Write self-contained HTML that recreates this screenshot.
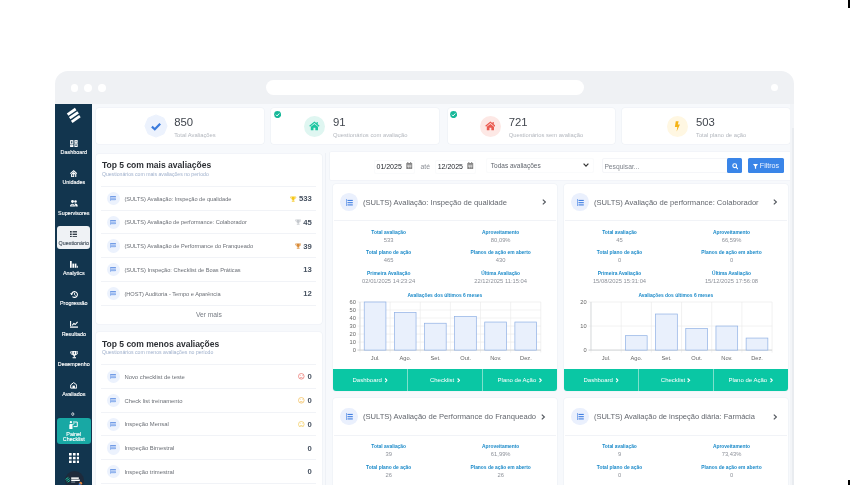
<!DOCTYPE html>
<html><head><meta charset="utf-8"><title>Painel Checklist</title>
<style>
*{box-sizing:border-box;margin:0;padding:0}
html,body{width:850px;height:485px;overflow:hidden;background:#fff;font-family:"Liberation Sans",sans-serif;}
.a{position:absolute}
.t{position:absolute;white-space:nowrap;line-height:1;transform:translateY(-50%);margin-top:0.7px}
.c{position:absolute;white-space:nowrap;line-height:1;transform:translate(-50%,-50%);margin-top:0.7px}
.r{position:absolute;white-space:nowrap;line-height:1;transform:translate(-100%,-50%);margin-top:0.7px}
.card{position:absolute;background:#fff;box-shadow:0 0 0 0.6px #edf0f5;border-radius:3px}
.sep{position:absolute;height:1px;background:#f1f3f7}
.sb{color:#fff;font-size:5.4px;-webkit-text-stroke:0.13px currentColor;margin-top:1.25px}
.lbl{color:#1b8ac9;font-size:4.9px;font-weight:bold}
.val{color:#8d9199;font-size:5.8px;margin-top:1.1px}
.li{color:#6b6f76;font-size:5.65px;margin-top:1.1px}
.num{color:#465160;font-size:7.7px;font-weight:bold}
.ax{color:#666;font-size:5.7px}
.btn{color:#fff;font-size:6px;margin-top:0.2px}
#root{position:absolute;left:0;top:0;width:850px;height:485px;overflow:hidden;will-change:transform;transform:translateZ(0)}
</style></head><body><div id="root">

<div class="a" style="left:848px;top:0;width:2px;height:8px;background:#000"></div>
<div class="a" style="left:848px;top:480px;width:2px;height:5px;background:#000"></div>
<div class="a" style="left:55px;top:71px;width:739px;height:430px;background:#eff1f4;border-radius:13px 13px 0 0"></div>
<div class="a" style="left:70.69999999999999px;top:84.0px;width:7.8px;height:7.8px;border-radius:50%;background:#fff"></div>
<div class="a" style="left:84.3px;top:84.0px;width:7.8px;height:7.8px;border-radius:50%;background:#fff"></div>
<div class="a" style="left:98.1px;top:84.0px;width:7.8px;height:7.8px;border-radius:50%;background:#fff"></div>
<div class="a" style="left:770.8px;top:84.2px;width:7.2px;height:7.2px;border-radius:50%;background:#fff"></div>
<div class="a" style="left:266px;top:80.2px;width:317.5px;height:15px;border-radius:7.5px;background:#fff"></div>
<div class="a" style="left:55px;top:104px;width:739px;height:390px;background:#f7f9fc"></div>
<div class="a" style="left:55px;top:104px;width:37.3px;height:390px;background:#12354e"></div>
<svg class="a" style="left:65px;top:106px" width="17" height="19" viewBox="0 0 17 19">
<g stroke="#fff" stroke-width="2.75" stroke-linecap="butt" fill="none">
<path d="M2.6 8.6 L10.7 3"/><path d="M4.7 12.1 L13.1 6.3"/><path d="M6.7 15.9 L14.9 10.2"/>
</g></svg>
<svg class="a" style="left:69.89999999999999px;top:139.6px" width="7.8" height="7.2" viewBox="0 0 7.8 7.2" fill="none" stroke="#fff" stroke-width="1.05">
<rect x="0.65" y="0.65" width="2.2" height="3.3"/><rect x="4.95" y="0.65" width="2.2" height="1.7"/><rect x="0.65" y="5.3" width="2.2" height="1.25"/><rect x="4.95" y="3.8" width="2.2" height="2.75"/></svg>
<div class="c sb" style="left:73.8px;top:151.3px;color:#fff">Dashboard</div>
<svg class="a" style="left:70.1px;top:169.70000000000002px" width="7.4" height="7.2" viewBox="0 0 7.4 7.2" fill="#fff">
<path d="M3.7 0 L0 3.3 L0.7 4 L3.7 1.4 L6.7 4 L7.4 3.3 Z"/><path d="M1.1 4 L3.7 1.9 L6.3 4 V7.2 H1.1 Z M2.2 4.3 V6.2 H3.2 V4.3 Z M4.2 4.3 V7.2 H5.2 V4.3 Z" fill-rule="evenodd"/></svg>
<div class="c sb" style="left:73.8px;top:182.1px;color:#fff">Unidades</div>
<svg class="a" style="left:69.89999999999999px;top:200.4px" width="7.8" height="6.4" viewBox="0 0 7.8 6.4" fill="#fff">
<circle cx="2.5" cy="1.5" r="1.45"/><circle cx="5.5" cy="1.5" r="1.3"/><path d="M0 6.4 C0 3 5 3 5 6.4 Z"/><path d="M5.4 6.4 C5.4 5 5 4.2 4.4 3.7 C6 3 7.8 3.8 7.8 6.4 Z"/>
<rect x="1.4" y="4.8" width="2.2" height="0.6" fill="#12354e"/></svg>
<div class="c sb" style="left:73.8px;top:212.5px;color:#fff">Supervisores</div>
<div class="a" style="left:56.9px;top:226.2px;width:33.5px;height:23.2px;border-radius:3px;background:#eff2f5"></div>
<svg class="a" style="left:70.0px;top:230.7px" width="7.4" height="6.6" viewBox="0 0 7.4 6.6" fill="#2a3540">
<rect x="0" y="0" width="1.7" height="1.6"/><rect x="2.6" y="0.15" width="4.8" height="1.3"/>
<rect x="0" y="2.5" width="1.7" height="1.6"/><rect x="2.6" y="2.65" width="4.8" height="1.3"/>
<rect x="0" y="5" width="1.7" height="1.6"/><rect x="2.6" y="5.15" width="4.8" height="1.3"/></svg>
<div class="c sb" style="left:73.8px;top:242.4px;color:#46525e">Questionário</div>
<svg class="a" style="left:69.89999999999999px;top:260.8px" width="7.8" height="6.8" viewBox="0 0 7.8 6.8" fill="#fff">
<rect x="0" y="0" width="1.7" height="6.8"/><rect x="2.4" y="2.6" width="1.8" height="4.2"/><rect x="4.8" y="2.6" width="1.6" height="4.2"/><rect x="6.8" y="4.8" width="1" height="2"/></svg>
<div class="c sb" style="left:73.8px;top:273.1px;color:#fff">Analytics</div>
<svg class="a" style="left:69.8px;top:291.2px" width="8" height="7" viewBox="0 0 8 7" fill="none" stroke="#fff" stroke-width="1.1">
<path d="M1.6 3.5 A2.9 2.9 0 1 1 2.5 5.6"/><path d="M4.5 1.9 V3.7 L5.7 4.5" stroke-width="0.9"/><path d="M0 2.3 L1.6 4.3 L3.2 2.5 Z" fill="#fff" stroke="none"/></svg>
<div class="c sb" style="left:73.8px;top:303.1px;color:#fff">Progressão</div>
<svg class="a" style="left:69.6px;top:321.20000000000005px" width="8.4" height="6.8" viewBox="0 0 8.4 6.8" fill="none" stroke="#fff" stroke-width="1.1">
<path d="M0.6 0 V5.2"/><path d="M0 6.1 H8.2" stroke-width="1.3"/><path d="M2.2 4.4 L3.9 2.4 L5.2 3.5 L7.6 0.8" stroke-linejoin="round"/></svg>
<div class="c sb" style="left:73.8px;top:333.6px;color:#fff">Resultado</div>
<svg class="a" style="left:69.5px;top:351.3px" width="8.6" height="7.4" viewBox="0 0 8.6 7.4" fill="#fff">
<path d="M2.2 0 H6.4 V2.6 C6.4 4.4 5.3 5 4.3 5 C3.3 5 2.2 4.4 2.2 2.6 Z"/><rect x="3.8" y="4.6" width="1" height="1.6"/><rect x="2.6" y="6.2" width="3.4" height="1.1"/>
<path d="M2.3 0.8 H0.6 C0.6 2.6 1.3 3.4 2.6 3.5" fill="none" stroke="#fff" stroke-width="0.9"/><path d="M6.3 0.8 H8 C8 2.6 7.3 3.4 6 3.5" fill="none" stroke="#fff" stroke-width="0.9"/>
<rect x="3.9" y="0.8" width="0.8" height="2.4" fill="#12354e"/></svg>
<div class="c sb" style="left:73.8px;top:363.5px;color:#fff">Desempenho</div>
<svg class="a" style="left:69.89999999999999px;top:382.0px" width="7.4" height="6.6" viewBox="0 0 7.4 6.6" fill="none" stroke="#fff" stroke-width="1">
<path d="M0.7 6.1 V2.9 L3.7 0.6 L6.7 2.9 V6.1 Z" stroke-linejoin="round"/><rect x="2.5" y="3.6" width="2.4" height="2.5" fill="#fff" stroke="none"/></svg>
<div class="c sb" style="left:73.8px;top:393.9px;color:#fff">Avaliados</div>
<svg class="a" style="left:71.4px;top:412px" width="3.6" height="4.2" viewBox="0 0 3.6 4.2"><ellipse cx="1.8" cy="2.1" rx="1.05" ry="1.35" fill="none" stroke="#fff" stroke-width="0.75"/></svg>
<div class="a" style="left:57px;top:417.6px;width:33.6px;height:26.2px;border-radius:3px;background:#18a8a4"></div>
<svg class="a" style="left:69.2px;top:420.8px" width="9" height="8" viewBox="0 0 9 8" fill="#fff">
<circle cx="1.9" cy="1.2" r="1.15"/><path d="M0.3 8 V4 C0.3 2.7 3.5 2.7 3.5 4 V8 Z"/><path d="M4 1 H8.3 V5.6 H4.6" fill="none" stroke="#fff" stroke-width="0.95"/><path d="M3.2 3.6 L5.4 2.6" stroke="#fff" stroke-width="0.9"/></svg>
<div class="c sb" style="left:73.8px;top:433.5px;color:#fff">Painel</div>
<div class="c sb" style="left:73.8px;top:438.6px;color:#fff">Checklist</div>
<svg class="a" style="left:68.5px;top:452.7px" width="10.6" height="10.2" viewBox="0 0 10.6 10.2" fill="#fff"><rect x="0.00" y="0.00" width="2.65" height="2.55"/><rect x="0.00" y="3.80" width="2.65" height="2.55"/><rect x="0.00" y="7.60" width="2.65" height="2.55"/><rect x="3.95" y="0.00" width="2.65" height="2.55"/><rect x="3.95" y="3.80" width="2.65" height="2.55"/><rect x="3.95" y="7.60" width="2.65" height="2.55"/><rect x="7.90" y="0.00" width="2.65" height="2.55"/><rect x="7.90" y="3.80" width="2.65" height="2.55"/><rect x="7.90" y="7.60" width="2.65" height="2.55"/></svg>
<div class="a" style="left:64.5px;top:470.5px;width:19px;height:19px;border-radius:50%;background:#1e2a3b"></div>
<svg class="a" style="left:64.5px;top:475.5px" width="18" height="9.5" viewBox="0 0 18 9.5">
<g stroke="#1bc5a0" stroke-width="1" fill="none"><path d="M0.6 3.4 L3.4 1.4"/><path d="M1.4 4.9 L4.6 2.6"/><path d="M2.6 6.2 L5.2 4.3"/></g>
<rect x="6.2" y="1.4" width="7.6" height="1.5" fill="#fff"/><rect x="6.2" y="3.5" width="8.6" height="1.5" fill="#fff"/><rect x="6.2" y="5.6" width="4" height="0.9" fill="#8fa0ad"/>
<circle cx="15.6" cy="7.2" r="1.5" fill="#e8873a"/><circle cx="14.6" cy="8.3" r="1" fill="#2f6fd6"/></svg>
<div class="card" style="left:95.8px;top:107.5px;width:168.2px;height:36.5px"></div>
<svg class="a" style="left:144px;top:114.4px" width="24" height="24" viewBox="-12 -12 24 24">
<polygon fill="#ecf2fd" points="11.10,0.00 9.52,3.94 7.85,7.85 3.94,9.52 0.00,11.10 -3.94,9.52 -7.85,7.85 -9.52,3.94 -11.10,0.00 -9.52,-3.94 -7.85,-7.85 -3.94,-9.52 -0.00,-11.10 3.94,-9.52 7.85,-7.85 9.52,-3.94" stroke="#ecf2fd" stroke-width="1" stroke-linejoin="round"/>
<path d="M-4.1 0.6 L-1.2 3.3 L4.2 -2.2" fill="none" stroke="#3b7bdc" stroke-width="2.2"/></svg>
<div class="t" style="left:174.2px;top:122.6px;font-size:11.3px;color:#41464e">850</div>
<div class="t" style="left:174.2px;top:134.9px;font-size:5.8px;color:#b3b7be">Total Avaliações</div>
<div class="card" style="left:271.3px;top:107.5px;width:168.0px;height:36.5px"></div>
<div class="a" style="left:303.79999999999995px;top:115.5px;width:21.2px;height:21.2px;border-radius:50%;background:#dff6f1"></div>
<svg class="a" style="left:309.0px;top:121.10000000000001px" width="10.8" height="9.6" viewBox="0 0 9 8" fill="#1bc5a0">
<path d="M4.5 0.4 L0.2 4 L0.9 4.7 L4.5 1.7 L8.1 4.7 L8.8 4 L7.3 2.7 V0.9 H6.3 V1.9 Z"/><path d="M1.5 4.8 L4.5 2.4 L7.5 4.8 V7.7 H5.3 V5.6 H3.7 V7.7 H1.5 Z"/></svg>
<div class="t" style="left:333px;top:122.6px;font-size:11.3px;color:#41464e">91</div>
<div class="t" style="left:333px;top:134.9px;font-size:5.8px;color:#b3b7be">Questionários com avaliação</div>
<div class="card" style="left:447.5px;top:107.5px;width:167.29999999999995px;height:36.5px"></div>
<div class="a" style="left:479.5px;top:115.5px;width:21.2px;height:21.2px;border-radius:50%;background:#fde8e5"></div>
<svg class="a" style="left:484.70000000000005px;top:121.10000000000001px" width="10.8" height="9.6" viewBox="0 0 9 8" fill="#ea5a50">
<path d="M4.5 0.4 L0.2 4 L0.9 4.7 L4.5 1.7 L8.1 4.7 L8.8 4 L7.3 2.7 V0.9 H6.3 V1.9 Z"/><path d="M1.5 4.8 L4.5 2.4 L7.5 4.8 V7.7 H5.3 V5.6 H3.7 V7.7 H1.5 Z"/></svg>
<div class="t" style="left:508.7px;top:122.6px;font-size:11.3px;color:#41464e">721</div>
<div class="t" style="left:508.7px;top:134.9px;font-size:5.8px;color:#b3b7be">Questionários sem avaliação</div>
<div class="card" style="left:622.4px;top:107.5px;width:167.60000000000002px;height:36.5px"></div>
<div class="a" style="left:666.6px;top:115.5px;width:21.2px;height:21.2px;border-radius:50%;background:#fff7e2"></div>
<svg class="a" style="left:673.9000000000001px;top:120.8px" width="6.6" height="10.8" viewBox="0 0 6 9" preserveAspectRatio="none" fill="#f5b417">
<path d="M1.6 0.3 H4.2 L3.5 3 H5.4 L2.4 8.8 L3 4.9 H0.8 Z"/></svg>
<div class="t" style="left:696px;top:122.6px;font-size:11.3px;color:#41464e">503</div>
<div class="t" style="left:696px;top:134.9px;font-size:5.8px;color:#b3b7be">Total plano de ação</div>
<svg class="a" style="left:274.0px;top:110.80000000000001px" width="7.2" height="7.2" viewBox="0 0 7.2 7.2"><circle cx="3.6" cy="3.6" r="3.5" fill="#17b899"/><path d="M1.9 3.7 L3.1 4.9 L5.3 2.5" fill="none" stroke="#fff" stroke-width="1"/></svg>
<svg class="a" style="left:449.79999999999995px;top:110.80000000000001px" width="7.2" height="7.2" viewBox="0 0 7.2 7.2"><circle cx="3.6" cy="3.6" r="3.5" fill="#17b899"/><path d="M1.9 3.7 L3.1 4.9 L5.3 2.5" fill="none" stroke="#fff" stroke-width="1"/></svg>
<div class="card" style="left:96.2px;top:153.5px;width:225.8px;height:170.1px"></div>
<div class="t" style="left:101.9px;top:164.3px;font-size:8.54px;font-weight:bold;color:#2d3035">Top 5 com mais avaliações</div>
<div class="t" style="left:101.9px;top:173.9px;font-size:5.15px;color:#9fb0cc">Questionários com mais avaliações no período</div>
<div class="sep" style="left:100.7px;top:186.00px;width:215.2px"></div>
<div class="a" style="left:106.7px;top:191.96px;width:13.2px;height:13.2px;border-radius:50%;background:#ecf2fd"></div>
<svg class="a" style="left:110.3px;top:195.86px" width="6" height="5" viewBox="0 0 6 5">
<rect x="0" y="0" width="0.6" height="5" fill="#6f9ae8"/><rect x="0.6" y="0.3" width="5.3" height="0.95" fill="#3f78dc"/><rect x="0.6" y="1.25" width="5.3" height="1.45" fill="#b9cff5"/><rect x="0.6" y="2.7" width="5.3" height="1" fill="#4f86e2"/><rect x="0.6" y="3.7" width="4.8" height="0.8" fill="#c6d8f7"/></svg>
<div class="t li" style="left:124.4px;top:198.56px">(SULTS) Avaliação: Inspeção de qualidade</div>
<div class="r num" style="left:311.8px;top:198.56px">533</div>
<svg class="a" style="left:290.40000000000003px;top:195.56px" width="6.4" height="6" viewBox="0 0 10 9" fill="#f6c719">
<path d="M2.6 0.4 H7.4 V3.2 C7.4 5.2 6.2 6 5 6 C3.8 6 2.6 5.2 2.6 3.2 Z"/><rect x="4.3" y="5.6" width="1.4" height="1.8"/><rect x="2.8" y="7.2" width="4.4" height="1.4"/>
<path d="M2.8 1.2 H0.8 C0.8 3.2 1.6 4.2 3 4.3" fill="none" stroke="#f6c719" stroke-width="1"/><path d="M7.2 1.2 H9.2 C9.2 3.2 8.4 4.2 7 4.3" fill="none" stroke="#f6c719" stroke-width="1"/></svg>
<div class="sep" style="left:100.7px;top:209.72px;width:215.2px"></div>
<div class="a" style="left:106.7px;top:215.67999999999998px;width:13.2px;height:13.2px;border-radius:50%;background:#ecf2fd"></div>
<svg class="a" style="left:110.3px;top:219.57999999999998px" width="6" height="5" viewBox="0 0 6 5">
<rect x="0" y="0" width="0.6" height="5" fill="#6f9ae8"/><rect x="0.6" y="0.3" width="5.3" height="0.95" fill="#3f78dc"/><rect x="0.6" y="1.25" width="5.3" height="1.45" fill="#b9cff5"/><rect x="0.6" y="2.7" width="5.3" height="1" fill="#4f86e2"/><rect x="0.6" y="3.7" width="4.8" height="0.8" fill="#c6d8f7"/></svg>
<div class="t li" style="left:124.4px;top:222.28px">(SULTS) Avaliação de performance: Colaborador</div>
<div class="r num" style="left:311.8px;top:222.28px">45</div>
<svg class="a" style="left:294.8px;top:219.27999999999997px" width="6.4" height="6" viewBox="0 0 10 9" fill="#c3c7cc">
<path d="M2.6 0.4 H7.4 V3.2 C7.4 5.2 6.2 6 5 6 C3.8 6 2.6 5.2 2.6 3.2 Z"/><rect x="4.3" y="5.6" width="1.4" height="1.8"/><rect x="2.8" y="7.2" width="4.4" height="1.4"/>
<path d="M2.8 1.2 H0.8 C0.8 3.2 1.6 4.2 3 4.3" fill="none" stroke="#c3c7cc" stroke-width="1"/><path d="M7.2 1.2 H9.2 C9.2 3.2 8.4 4.2 7 4.3" fill="none" stroke="#c3c7cc" stroke-width="1"/></svg>
<div class="sep" style="left:100.7px;top:233.44px;width:215.2px"></div>
<div class="a" style="left:106.7px;top:239.4px;width:13.2px;height:13.2px;border-radius:50%;background:#ecf2fd"></div>
<svg class="a" style="left:110.3px;top:243.3px" width="6" height="5" viewBox="0 0 6 5">
<rect x="0" y="0" width="0.6" height="5" fill="#6f9ae8"/><rect x="0.6" y="0.3" width="5.3" height="0.95" fill="#3f78dc"/><rect x="0.6" y="1.25" width="5.3" height="1.45" fill="#b9cff5"/><rect x="0.6" y="2.7" width="5.3" height="1" fill="#4f86e2"/><rect x="0.6" y="3.7" width="4.8" height="0.8" fill="#c6d8f7"/></svg>
<div class="t li" style="left:124.4px;top:246.00px">(SULTS) Avaliação de Performance do Franqueado</div>
<div class="r num" style="left:311.8px;top:246.00px">39</div>
<svg class="a" style="left:294.8px;top:243.0px" width="6.4" height="6" viewBox="0 0 10 9" fill="#d98a36">
<path d="M2.6 0.4 H7.4 V3.2 C7.4 5.2 6.2 6 5 6 C3.8 6 2.6 5.2 2.6 3.2 Z"/><rect x="4.3" y="5.6" width="1.4" height="1.8"/><rect x="2.8" y="7.2" width="4.4" height="1.4"/>
<path d="M2.8 1.2 H0.8 C0.8 3.2 1.6 4.2 3 4.3" fill="none" stroke="#d98a36" stroke-width="1"/><path d="M7.2 1.2 H9.2 C9.2 3.2 8.4 4.2 7 4.3" fill="none" stroke="#d98a36" stroke-width="1"/></svg>
<div class="sep" style="left:100.7px;top:257.16px;width:215.2px"></div>
<div class="a" style="left:106.7px;top:263.11999999999995px;width:13.2px;height:13.2px;border-radius:50%;background:#ecf2fd"></div>
<svg class="a" style="left:110.3px;top:267.02px" width="6" height="5" viewBox="0 0 6 5">
<rect x="0" y="0" width="0.6" height="5" fill="#6f9ae8"/><rect x="0.6" y="0.3" width="5.3" height="0.95" fill="#3f78dc"/><rect x="0.6" y="1.25" width="5.3" height="1.45" fill="#b9cff5"/><rect x="0.6" y="2.7" width="5.3" height="1" fill="#4f86e2"/><rect x="0.6" y="3.7" width="4.8" height="0.8" fill="#c6d8f7"/></svg>
<div class="t li" style="left:124.4px;top:269.72px">(SULTS) Inspeção: Checklist de Boas Práticas</div>
<div class="r num" style="left:311.8px;top:269.72px">13</div>
<div class="sep" style="left:100.7px;top:280.88px;width:215.2px"></div>
<div class="a" style="left:106.7px;top:286.84px;width:13.2px;height:13.2px;border-radius:50%;background:#ecf2fd"></div>
<svg class="a" style="left:110.3px;top:290.74px" width="6" height="5" viewBox="0 0 6 5">
<rect x="0" y="0" width="0.6" height="5" fill="#6f9ae8"/><rect x="0.6" y="0.3" width="5.3" height="0.95" fill="#3f78dc"/><rect x="0.6" y="1.25" width="5.3" height="1.45" fill="#b9cff5"/><rect x="0.6" y="2.7" width="5.3" height="1" fill="#4f86e2"/><rect x="0.6" y="3.7" width="4.8" height="0.8" fill="#c6d8f7"/></svg>
<div class="t li" style="left:124.4px;top:293.44px">(HOST) Auditoria - Tempo e Aparência</div>
<div class="r num" style="left:311.8px;top:293.44px">12</div>
<div class="sep" style="left:100.7px;top:304.60px;width:215.2px"></div>
<div class="c" style="left:208.9px;top:314.3px;font-size:6.7px;color:#777c84">Ver mais</div>
<div class="card" style="left:96.2px;top:331.5px;width:225.8px;height:170px"></div>
<div class="t" style="left:101.9px;top:343px;font-size:8.54px;font-weight:bold;color:#2d3035">Top 5 com menos avaliações</div>
<div class="t" style="left:101.9px;top:352.5px;font-size:5.15px;color:#9fb0cc">Questionários com menos avaliações no período</div>
<div class="sep" style="left:100.7px;top:364.20px;width:215.2px"></div>
<div class="a" style="left:106.7px;top:370.15999999999997px;width:13.2px;height:13.2px;border-radius:50%;background:#ecf2fd"></div>
<svg class="a" style="left:110.3px;top:374.06px" width="6" height="5" viewBox="0 0 6 5">
<rect x="0" y="0" width="0.6" height="5" fill="#6f9ae8"/><rect x="0.6" y="0.3" width="5.3" height="0.95" fill="#3f78dc"/><rect x="0.6" y="1.25" width="5.3" height="1.45" fill="#b9cff5"/><rect x="0.6" y="2.7" width="5.3" height="1" fill="#4f86e2"/><rect x="0.6" y="3.7" width="4.8" height="0.8" fill="#c6d8f7"/></svg>
<div class="t li" style="left:124.4px;top:376.76px;font-size:5.88px">Novo checklist de teste</div>
<div class="r num" style="left:311.8px;top:376.76px">0</div>
<svg class="a" style="left:298.4px;top:373.46px" width="6.6" height="6.6" viewBox="0 0 6.6 6.6" fill="none" stroke="#e8635c" stroke-width="0.65">
<circle cx="3.3" cy="3.3" r="2.8"/><path d="M2 4.9 Q3.3 3.9 4.6 4.9" stroke-width="0.6"/><circle cx="2.3" cy="2.6" r="0.35" fill="#e8635c" stroke="none"/><circle cx="4.3" cy="2.6" r="0.35" fill="#e8635c" stroke="none"/></svg>
<div class="sep" style="left:100.7px;top:387.92px;width:215.2px"></div>
<div class="a" style="left:106.7px;top:393.87999999999994px;width:13.2px;height:13.2px;border-radius:50%;background:#ecf2fd"></div>
<svg class="a" style="left:110.3px;top:397.78px" width="6" height="5" viewBox="0 0 6 5">
<rect x="0" y="0" width="0.6" height="5" fill="#6f9ae8"/><rect x="0.6" y="0.3" width="5.3" height="0.95" fill="#3f78dc"/><rect x="0.6" y="1.25" width="5.3" height="1.45" fill="#b9cff5"/><rect x="0.6" y="2.7" width="5.3" height="1" fill="#4f86e2"/><rect x="0.6" y="3.7" width="4.8" height="0.8" fill="#c6d8f7"/></svg>
<div class="t li" style="left:124.4px;top:400.48px;font-size:5.88px">Check list treinamento</div>
<div class="r num" style="left:311.8px;top:400.48px">0</div>
<svg class="a" style="left:298.4px;top:397.17999999999995px" width="6.6" height="6.6" viewBox="0 0 6.6 6.6" fill="none" stroke="#f1b646" stroke-width="0.65">
<circle cx="3.3" cy="3.3" r="2.8"/><path d="M2.1 4.6 H4.5" stroke-width="0.6"/><circle cx="2.3" cy="2.6" r="0.35" fill="#f1b646" stroke="none"/><circle cx="4.3" cy="2.6" r="0.35" fill="#f1b646" stroke="none"/></svg>
<div class="sep" style="left:100.7px;top:411.64px;width:215.2px"></div>
<div class="a" style="left:106.7px;top:417.59999999999997px;width:13.2px;height:13.2px;border-radius:50%;background:#ecf2fd"></div>
<svg class="a" style="left:110.3px;top:421.5px" width="6" height="5" viewBox="0 0 6 5">
<rect x="0" y="0" width="0.6" height="5" fill="#6f9ae8"/><rect x="0.6" y="0.3" width="5.3" height="0.95" fill="#3f78dc"/><rect x="0.6" y="1.25" width="5.3" height="1.45" fill="#b9cff5"/><rect x="0.6" y="2.7" width="5.3" height="1" fill="#4f86e2"/><rect x="0.6" y="3.7" width="4.8" height="0.8" fill="#c6d8f7"/></svg>
<div class="t li" style="left:124.4px;top:424.20px;font-size:5.88px">Inspeção Mensal</div>
<div class="r num" style="left:311.8px;top:424.20px">0</div>
<svg class="a" style="left:298.4px;top:420.9px" width="6.6" height="6.6" viewBox="0 0 6.6 6.6" fill="none" stroke="#f3c64a" stroke-width="0.65">
<circle cx="3.3" cy="3.3" r="2.8"/><path d="M2.1 4.6 H4.5" stroke-width="0.6"/><circle cx="2.3" cy="2.6" r="0.35" fill="#f3c64a" stroke="none"/><circle cx="4.3" cy="2.6" r="0.35" fill="#f3c64a" stroke="none"/></svg>
<div class="sep" style="left:100.7px;top:435.36px;width:215.2px"></div>
<div class="a" style="left:106.7px;top:441.32px;width:13.2px;height:13.2px;border-radius:50%;background:#ecf2fd"></div>
<svg class="a" style="left:110.3px;top:445.22px" width="6" height="5" viewBox="0 0 6 5">
<rect x="0" y="0" width="0.6" height="5" fill="#6f9ae8"/><rect x="0.6" y="0.3" width="5.3" height="0.95" fill="#3f78dc"/><rect x="0.6" y="1.25" width="5.3" height="1.45" fill="#b9cff5"/><rect x="0.6" y="2.7" width="5.3" height="1" fill="#4f86e2"/><rect x="0.6" y="3.7" width="4.8" height="0.8" fill="#c6d8f7"/></svg>
<div class="t li" style="left:124.4px;top:447.92px;font-size:5.88px">Inspeção Bimestral</div>
<div class="r num" style="left:311.8px;top:447.92px">0</div>
<div class="sep" style="left:100.7px;top:459.08px;width:215.2px"></div>
<div class="a" style="left:106.7px;top:465.03999999999996px;width:13.2px;height:13.2px;border-radius:50%;background:#ecf2fd"></div>
<svg class="a" style="left:110.3px;top:468.94px" width="6" height="5" viewBox="0 0 6 5">
<rect x="0" y="0" width="0.6" height="5" fill="#6f9ae8"/><rect x="0.6" y="0.3" width="5.3" height="0.95" fill="#3f78dc"/><rect x="0.6" y="1.25" width="5.3" height="1.45" fill="#b9cff5"/><rect x="0.6" y="2.7" width="5.3" height="1" fill="#4f86e2"/><rect x="0.6" y="3.7" width="4.8" height="0.8" fill="#c6d8f7"/></svg>
<div class="t li" style="left:124.4px;top:471.64px;font-size:5.88px">Inspeção trimestral</div>
<div class="r num" style="left:311.8px;top:471.64px">0</div>
<div class="sep" style="left:100.7px;top:482.80px;width:215.2px"></div>
<div class="a" style="left:325px;top:153px;width:1px;height:340px;background:#eef1f6"></div>
<div class="card" style="left:329.8px;top:152.1px;width:461px;height:28px;border-radius:1px"></div>
<div class="a" style="left:374.2px;top:159.5px;width:40.5px;height:14px;border:1px solid #fafbfc;border-radius:2px"></div>
<div class="t" style="left:376.5px;top:165.6px;font-size:7px;color:#23272d">01/2025</div>
<svg class="a" style="left:406.09999999999997px;top:162.4px" width="6.5" height="7.2" viewBox="0 0 6 6.8" fill="#858585">
<rect x="0.2" y="1" width="5.6" height="5.6" rx="0.5"/><rect x="1.2" y="0" width="0.9" height="1.6"/><rect x="3.9" y="0" width="0.9" height="1.6"/>
<g fill="#fff"><rect x="0.9" y="2.7" width="4.2" height="0.5"/><rect x="2" y="3.2" width="0.4" height="2.8"/><rect x="3.6" y="3.2" width="0.4" height="2.8"/><rect x="0.9" y="4.3" width="4.2" height="0.4"/></g></svg>
<div class="t" style="left:420.5px;top:166.3px;font-size:6.9px;color:#8c9097">até</div>
<div class="a" style="left:435.4px;top:159.5px;width:40.5px;height:14px;border:1px solid #fafbfc;border-radius:2px"></div>
<div class="t" style="left:437.7px;top:165.6px;font-size:7px;color:#23272d">12/2025</div>
<svg class="a" style="left:467.2px;top:162.4px" width="6.5" height="7.2" viewBox="0 0 6 6.8" fill="#858585">
<rect x="0.2" y="1" width="5.6" height="5.6" rx="0.5"/><rect x="1.2" y="0" width="0.9" height="1.6"/><rect x="3.9" y="0" width="0.9" height="1.6"/>
<g fill="#fff"><rect x="0.9" y="2.7" width="4.2" height="0.5"/><rect x="2" y="3.2" width="0.4" height="2.8"/><rect x="3.6" y="3.2" width="0.4" height="2.8"/><rect x="0.9" y="4.3" width="4.2" height="0.4"/></g></svg>
<div class="a" style="left:486px;top:158.3px;width:108px;height:15px;border:1px solid #fafbfc;border-radius:2px"></div>
<div class="t" style="left:490.8px;top:165.5px;font-size:6.5px;color:#5f646c">Todas avaliações</div>
<svg class="a" style="left:583.3px;top:163.3px" width="6" height="4.4" viewBox="0 0 6 4.4" fill="none" stroke="#333" stroke-width="1.2"><path d="M0.6 0.7 L3 3.2 L5.4 0.7"/></svg>
<div class="a" style="left:601.6px;top:158.3px;width:126px;height:15px;border:1px solid #f5f6f9;border-radius:2px 0 0 2px;background:#fff"></div>
<div class="t" style="left:604.4px;top:166.2px;font-size:6.7px;color:#7d828a">Pesquisar...</div>
<div class="a" style="left:727px;top:158.3px;width:15px;height:15px;background:#3a85e8;border-radius:1.5px"></div>
<svg class="a" style="left:731.9px;top:163px" width="6.6" height="6.6" viewBox="0 0 6.6 6.6" fill="none" stroke="#fff" stroke-width="1.1"><circle cx="2.7" cy="2.7" r="1.9"/><path d="M4.1 4.1 L6.1 6.1"/></svg>
<div class="a" style="left:747.8px;top:158.3px;width:36.2px;height:15px;background:#3a85e8;border-radius:1.5px"></div>
<svg class="a" style="left:752.6px;top:164.1px" width="5" height="5.2" viewBox="0 0 5 5.2" fill="#fff"><path d="M0 0 H5 L3.1 2.4 V5.2 L1.9 4.3 V2.4 Z"/></svg>
<div class="t" style="left:759.8px;top:166.4px;font-size:7.1px;color:#eef4ff">Filtros</div>
<div class="card" style="left:332.6px;top:183.8px;width:224.60000000000002px;height:207.2px"></div>
<div class="a" style="left:340.00000000000006px;top:193.20000000000002px;width:17.8px;height:17.8px;border-radius:50%;background:#eaf0fd"></div>
<svg class="a" style="left:346.00000000000006px;top:198.60000000000002px" width="6.8" height="7.1" viewBox="0 0 6.8 7.1" fill="#3c7be0">
<rect x="0" y="0" width="0.7" height="7.1" opacity="0.85"/>
<rect x="1.5" y="0.9" width="5.3" height="1.05"/><rect x="1.5" y="3.15" width="5.3" height="1.05"/><rect x="1.5" y="5.4" width="5.3" height="1.05"/></svg>
<div class="t" style="left:362.90000000000003px;top:202.20000000000002px;font-size:7.6px;color:#62666d">(SULTS) Avaliação: Inspeção de qualidade</div>
<svg class="a" style="left:541.6px;top:199.10000000000002px" width="4.4" height="6" viewBox="0 0 4.4 6" fill="none" stroke="#53575e" stroke-width="1.15"><path d="M0.8 0.6 L3.4 3 L0.8 5.4"/></svg>
<div class="sep" style="left:333.6px;top:220.4px;width:222.60000000000002px"></div>
<div class="c lbl" style="left:388.7px;top:232.0px">Total avaliação</div>
<div class="c val" style="left:388.7px;top:239.60000000000002px">533</div>
<div class="c lbl" style="left:500.7px;top:232.0px">Aproveitamento</div>
<div class="c val" style="left:500.7px;top:239.60000000000002px">80,09%</div>
<div class="c lbl" style="left:388.7px;top:252.60000000000002px">Total plano de ação</div>
<div class="c val" style="left:388.7px;top:260.20000000000005px">465</div>
<div class="c lbl" style="left:500.7px;top:252.60000000000002px">Planos de ação em aberto</div>
<div class="c val" style="left:500.7px;top:260.20000000000005px">430</div>
<div class="c lbl" style="left:388.7px;top:273.0px">Primeira Avaliação</div>
<div class="c val" style="left:388.7px;top:280.8px">02/01/2025 14:23:24</div>
<div class="c lbl" style="left:500.7px;top:273.0px">Última Avaliação</div>
<div class="c val" style="left:500.7px;top:280.8px">22/12/2025 11:15:04</div>
<div class="c lbl" style="left:444.90000000000003px;top:295.5px">Avaliações dos últimos 6 meses</div>
<svg class="a" style="left:340.2px;top:296.3px" width="206.8" height="62.099999999999966" viewBox="-20 -6 206.8 62.099999999999966"><path d="M-2.5 48.10 H180.80" stroke="#e9e9e9" stroke-width="0.6"/><path d="M-2.5 40.08 H180.80" stroke="#e9e9e9" stroke-width="0.6"/><path d="M-2.5 32.07 H180.80" stroke="#e9e9e9" stroke-width="0.6"/><path d="M-2.5 24.05 H180.80" stroke="#e9e9e9" stroke-width="0.6"/><path d="M-2.5 16.03 H180.80" stroke="#e9e9e9" stroke-width="0.6"/><path d="M-2.5 8.02 H180.80" stroke="#e9e9e9" stroke-width="0.6"/><path d="M-2.5 0.00 H180.80" stroke="#e9e9e9" stroke-width="0.6"/><path d="M0.00 0 V50.60" stroke="#e9e9e9" stroke-width="0.6"/><path d="M30.13 0 V50.60" stroke="#e9e9e9" stroke-width="0.6"/><path d="M60.27 0 V50.60" stroke="#e9e9e9" stroke-width="0.6"/><path d="M90.40 0 V50.60" stroke="#e9e9e9" stroke-width="0.6"/><path d="M120.53 0 V50.60" stroke="#e9e9e9" stroke-width="0.6"/><path d="M150.67 0 V50.60" stroke="#e9e9e9" stroke-width="0.6"/><path d="M180.80 0 V50.60" stroke="#e9e9e9" stroke-width="0.6"/><path d="M0 0 V48.10" stroke="#cfd2d6" stroke-width="0.7"/><path d="M-2.5 48.10 H180.80" stroke="#c4c7cb" stroke-width="0.7"/><rect x="4.22" y="-0.00" width="21.70" height="48.10" fill="#e9f0fc" stroke="#8fb0e4" stroke-width="0.7"/><rect x="34.35" y="10.42" width="21.70" height="37.68" fill="#e9f0fc" stroke="#8fb0e4" stroke-width="0.7"/><rect x="64.49" y="21.24" width="21.70" height="26.86" fill="#e9f0fc" stroke="#8fb0e4" stroke-width="0.7"/><rect x="94.62" y="14.43" width="21.70" height="33.67" fill="#e9f0fc" stroke="#8fb0e4" stroke-width="0.7"/><rect x="124.75" y="20.04" width="21.70" height="28.06" fill="#e9f0fc" stroke="#8fb0e4" stroke-width="0.7"/><rect x="154.89" y="20.04" width="21.70" height="28.06" fill="#e9f0fc" stroke="#8fb0e4" stroke-width="0.7"/></svg>
<div class="r ax" style="left:355.8px;top:350.50px">0</div>
<div class="r ax" style="left:355.8px;top:342.48px">10</div>
<div class="r ax" style="left:355.8px;top:334.47px">20</div>
<div class="r ax" style="left:355.8px;top:326.45px">30</div>
<div class="r ax" style="left:355.8px;top:318.43px">40</div>
<div class="r ax" style="left:355.8px;top:310.42px">50</div>
<div class="r ax" style="left:355.8px;top:302.40px">60</div>
<div class="c ax" style="left:375.27px;top:358.2px">Jul.</div>
<div class="c ax" style="left:405.40px;top:358.2px">Ago.</div>
<div class="c ax" style="left:435.53px;top:358.2px">Set.</div>
<div class="c ax" style="left:465.67px;top:358.2px">Out.</div>
<div class="c ax" style="left:495.80px;top:358.2px">Nov.</div>
<div class="c ax" style="left:525.93px;top:358.2px">Dez.</div>
<div class="a" style="left:332.6px;top:369.20000000000005px;width:224.60000000000002px;height:21.7px;background:#0ac7a4;border-radius:0 0 3px 3px"></div>
<div class="c btn" style="left:370.03px;top:380.1px">Dashboard <svg width="3.4" height="4.6" viewBox="0 0 3.4 4.6" style="margin-left:0.6px;vertical-align:-0.75px" fill="none" stroke="#fff" stroke-width="1.1"><path d="M0.6 0.5 L2.6 2.3 L0.6 4.1"/></svg></div>
<div class="a" style="left:407.07px;top:369.20000000000005px;width:0.8px;height:21.7px;background:#7fe0cc"></div>
<div class="c btn" style="left:444.90px;top:380.1px">Checklist <svg width="3.4" height="4.6" viewBox="0 0 3.4 4.6" style="margin-left:0.6px;vertical-align:-0.75px" fill="none" stroke="#fff" stroke-width="1.1"><path d="M0.6 0.5 L2.6 2.3 L0.6 4.1"/></svg></div>
<div class="a" style="left:481.93px;top:369.20000000000005px;width:0.8px;height:21.7px;background:#7fe0cc"></div>
<div class="c btn" style="left:519.77px;top:380.1px">Plano de Ação <svg width="3.4" height="4.6" viewBox="0 0 3.4 4.6" style="margin-left:0.6px;vertical-align:-0.75px" fill="none" stroke="#fff" stroke-width="1.1"><path d="M0.6 0.5 L2.6 2.3 L0.6 4.1"/></svg></div>
<div class="card" style="left:563.6px;top:183.8px;width:224.39999999999998px;height:207.2px"></div>
<div class="a" style="left:571.0px;top:193.20000000000002px;width:17.8px;height:17.8px;border-radius:50%;background:#eaf0fd"></div>
<svg class="a" style="left:577.0px;top:198.60000000000002px" width="6.8" height="7.1" viewBox="0 0 6.8 7.1" fill="#3c7be0">
<rect x="0" y="0" width="0.7" height="7.1" opacity="0.85"/>
<rect x="1.5" y="0.9" width="5.3" height="1.05"/><rect x="1.5" y="3.15" width="5.3" height="1.05"/><rect x="1.5" y="5.4" width="5.3" height="1.05"/></svg>
<div class="t" style="left:593.9px;top:202.20000000000002px;font-size:7.6px;color:#62666d">(SULTS) Avaliação de performance: Colaborador</div>
<svg class="a" style="left:772.6px;top:199.10000000000002px" width="4.4" height="6" viewBox="0 0 4.4 6" fill="none" stroke="#53575e" stroke-width="1.15"><path d="M0.8 0.6 L3.4 3 L0.8 5.4"/></svg>
<div class="sep" style="left:564.6px;top:220.4px;width:222.39999999999998px"></div>
<div class="c lbl" style="left:619.5px;top:232.0px">Total avaliação</div>
<div class="c val" style="left:619.5px;top:239.60000000000002px">45</div>
<div class="c lbl" style="left:731.5px;top:232.0px">Aproveitamento</div>
<div class="c val" style="left:731.5px;top:239.60000000000002px">66,59%</div>
<div class="c lbl" style="left:619.5px;top:252.60000000000002px">Total plano de ação</div>
<div class="c val" style="left:619.5px;top:260.20000000000005px">0</div>
<div class="c lbl" style="left:731.5px;top:252.60000000000002px">Planos de ação em aberto</div>
<div class="c val" style="left:731.5px;top:260.20000000000005px">0</div>
<div class="c lbl" style="left:619.5px;top:273.0px">Primeira Avaliação</div>
<div class="c val" style="left:619.5px;top:280.8px">15/08/2025 15:31:04</div>
<div class="c lbl" style="left:731.5px;top:273.0px">Última Avaliação</div>
<div class="c val" style="left:731.5px;top:280.8px">15/12/2025 17:56:08</div>
<div class="c lbl" style="left:675.8px;top:295.5px">Avaliações dos últimos 6 meses</div>
<svg class="a" style="left:571.1px;top:296.3px" width="207.10000000000002" height="62.099999999999966" viewBox="-20 -6 207.10000000000002 62.099999999999966"><path d="M-2.5 48.10 H181.10" stroke="#e9e9e9" stroke-width="0.6"/><path d="M-2.5 24.05 H181.10" stroke="#e9e9e9" stroke-width="0.6"/><path d="M-2.5 0.00 H181.10" stroke="#e9e9e9" stroke-width="0.6"/><path d="M0.00 0 V50.60" stroke="#e9e9e9" stroke-width="0.6"/><path d="M30.18 0 V50.60" stroke="#e9e9e9" stroke-width="0.6"/><path d="M60.37 0 V50.60" stroke="#e9e9e9" stroke-width="0.6"/><path d="M90.55 0 V50.60" stroke="#e9e9e9" stroke-width="0.6"/><path d="M120.73 0 V50.60" stroke="#e9e9e9" stroke-width="0.6"/><path d="M150.92 0 V50.60" stroke="#e9e9e9" stroke-width="0.6"/><path d="M181.10 0 V50.60" stroke="#e9e9e9" stroke-width="0.6"/><path d="M0 0 V48.10" stroke="#cfd2d6" stroke-width="0.7"/><path d="M-2.5 48.10 H181.10" stroke="#c4c7cb" stroke-width="0.7"/><rect x="34.41" y="33.67" width="21.73" height="14.43" fill="#e9f0fc" stroke="#8fb0e4" stroke-width="0.7"/><rect x="64.59" y="12.02" width="21.73" height="36.07" fill="#e9f0fc" stroke="#8fb0e4" stroke-width="0.7"/><rect x="94.78" y="26.45" width="21.73" height="21.64" fill="#e9f0fc" stroke="#8fb0e4" stroke-width="0.7"/><rect x="124.96" y="24.05" width="21.73" height="24.05" fill="#e9f0fc" stroke="#8fb0e4" stroke-width="0.7"/><rect x="155.14" y="36.07" width="21.73" height="12.02" fill="#e9f0fc" stroke="#8fb0e4" stroke-width="0.7"/></svg>
<div class="r ax" style="left:586.7px;top:350.50px">0</div>
<div class="r ax" style="left:586.7px;top:326.45px">10</div>
<div class="r ax" style="left:586.7px;top:302.40px">20</div>
<div class="c ax" style="left:606.19px;top:358.2px">Jul.</div>
<div class="c ax" style="left:636.38px;top:358.2px">Ago.</div>
<div class="c ax" style="left:666.56px;top:358.2px">Set.</div>
<div class="c ax" style="left:696.74px;top:358.2px">Out.</div>
<div class="c ax" style="left:726.93px;top:358.2px">Nov.</div>
<div class="c ax" style="left:757.11px;top:358.2px">Dez.</div>
<div class="a" style="left:563.6px;top:369.20000000000005px;width:224.39999999999998px;height:21.7px;background:#0ac7a4;border-radius:0 0 3px 3px"></div>
<div class="c btn" style="left:601.00px;top:380.1px">Dashboard <svg width="3.4" height="4.6" viewBox="0 0 3.4 4.6" style="margin-left:0.6px;vertical-align:-0.75px" fill="none" stroke="#fff" stroke-width="1.1"><path d="M0.6 0.5 L2.6 2.3 L0.6 4.1"/></svg></div>
<div class="a" style="left:638.00px;top:369.20000000000005px;width:0.8px;height:21.7px;background:#7fe0cc"></div>
<div class="c btn" style="left:675.80px;top:380.1px">Checklist <svg width="3.4" height="4.6" viewBox="0 0 3.4 4.6" style="margin-left:0.6px;vertical-align:-0.75px" fill="none" stroke="#fff" stroke-width="1.1"><path d="M0.6 0.5 L2.6 2.3 L0.6 4.1"/></svg></div>
<div class="a" style="left:712.80px;top:369.20000000000005px;width:0.8px;height:21.7px;background:#7fe0cc"></div>
<div class="c btn" style="left:750.60px;top:380.1px">Plano de Ação <svg width="3.4" height="4.6" viewBox="0 0 3.4 4.6" style="margin-left:0.6px;vertical-align:-0.75px" fill="none" stroke="#fff" stroke-width="1.1"><path d="M0.6 0.5 L2.6 2.3 L0.6 4.1"/></svg></div>
<div class="card" style="left:332.6px;top:398.2px;width:224.60000000000002px;height:100px"></div>
<div class="a" style="left:340.00000000000006px;top:407.6px;width:17.8px;height:17.8px;border-radius:50%;background:#eaf0fd"></div>
<svg class="a" style="left:346.00000000000006px;top:413.0px" width="6.8" height="7.1" viewBox="0 0 6.8 7.1" fill="#3c7be0">
<rect x="0" y="0" width="0.7" height="7.1" opacity="0.85"/>
<rect x="1.5" y="0.9" width="5.3" height="1.05"/><rect x="1.5" y="3.15" width="5.3" height="1.05"/><rect x="1.5" y="5.4" width="5.3" height="1.05"/></svg>
<div class="t" style="left:362.90000000000003px;top:416.59999999999997px;font-size:7.6px;color:#62666d">(SULTS) Avaliação de Performance do Franqueado</div>
<svg class="a" style="left:541.3px;top:413.5px" width="4.4" height="6" viewBox="0 0 4.4 6" fill="none" stroke="#53575e" stroke-width="1.15"><path d="M0.8 0.6 L3.4 3 L0.8 5.4"/></svg>
<div class="sep" style="left:333.6px;top:434.8px;width:222.60000000000002px"></div>
<div class="c lbl" style="left:388.7px;top:446.4px">Total avaliação</div>
<div class="c val" style="left:388.7px;top:454.0px">39</div>
<div class="c lbl" style="left:500.7px;top:446.4px">Aproveitamento</div>
<div class="c val" style="left:500.7px;top:454.0px">61,99%</div>
<div class="c lbl" style="left:388.7px;top:467.0px">Total plano de ação</div>
<div class="c val" style="left:388.7px;top:474.6px">26</div>
<div class="c lbl" style="left:500.7px;top:467.0px">Planos de ação em aberto</div>
<div class="c val" style="left:500.7px;top:474.6px">26</div>
<div class="card" style="left:563.6px;top:398.2px;width:224.39999999999998px;height:100px"></div>
<div class="a" style="left:571.0px;top:407.6px;width:17.8px;height:17.8px;border-radius:50%;background:#eaf0fd"></div>
<svg class="a" style="left:577.0px;top:413.0px" width="6.8" height="7.1" viewBox="0 0 6.8 7.1" fill="#3c7be0">
<rect x="0" y="0" width="0.7" height="7.1" opacity="0.85"/>
<rect x="1.5" y="0.9" width="5.3" height="1.05"/><rect x="1.5" y="3.15" width="5.3" height="1.05"/><rect x="1.5" y="5.4" width="5.3" height="1.05"/></svg>
<div class="t" style="left:593.9px;top:416.59999999999997px;font-size:7.5px;color:#62666d">(SULTS) Avaliação de inspeção diária: Farmácia</div>
<svg class="a" style="left:772.6px;top:413.5px" width="4.4" height="6" viewBox="0 0 4.4 6" fill="none" stroke="#53575e" stroke-width="1.15"><path d="M0.8 0.6 L3.4 3 L0.8 5.4"/></svg>
<div class="sep" style="left:564.6px;top:434.8px;width:222.39999999999998px"></div>
<div class="c lbl" style="left:619.5px;top:446.4px">Total avaliação</div>
<div class="c val" style="left:619.5px;top:454.0px">9</div>
<div class="c lbl" style="left:731.5px;top:446.4px">Aproveitamento</div>
<div class="c val" style="left:731.5px;top:454.0px">73,43%</div>
<div class="c lbl" style="left:619.5px;top:467.0px">Total plano de ação</div>
<div class="c val" style="left:619.5px;top:474.6px">0</div>
<div class="c lbl" style="left:731.5px;top:467.0px">Planos de ação em aberto</div>
<div class="c val" style="left:731.5px;top:474.6px">0</div>
<div class="a" style="left:790.4px;top:104px;width:3.6px;height:390px;background:#f3f5f8"></div>
<div class="a" style="left:791.6px;top:128px;width:2.4px;height:360px;background:#e9ecf0"></div>
</div></body></html>
